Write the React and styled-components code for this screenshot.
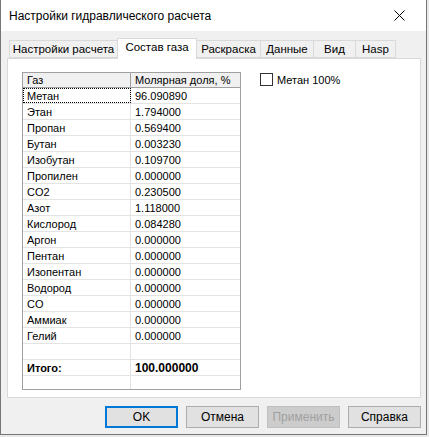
import React from "react";
import styled, { createGlobalStyle } from "styled-components";

const GlobalStyle = createGlobalStyle`
  html, body {
    margin: 0;
    padding: 0;
    background: #e8e8e8;
  }
  * {
    box-sizing: border-box;
  }
`;

const Window = styled.div`
  width: 427px;
  height: 435px;
  border: 1px solid #767676;
  border-top: none;
  background: #f0f0f0;
  display: flex;
  flex-direction: column;
  font-family: "Liberation Sans", Arial, sans-serif;
  color: #000;
`;

const TitleBar = styled.div`
  height: 31px;
  background: #fff;
  display: flex;
  align-items: center;
  justify-content: space-between;
  padding-left: 8px;
  font-size: 12px;
`;

const CloseButton = styled.div`
  width: 46px;
  height: 31px;
  display: flex;
  align-items: center;
  justify-content: center;
  margin-right: 4px;
`;

const Body = styled.div`
  flex: 1;
  display: flex;
  flex-direction: column;
  padding: 7px 5px 0 6px;
`;

const TabStrip = styled.div`
  display: flex;
  align-items: flex-end;
  height: 20px;
  padding-left: 2px;
  position: relative;
  z-index: 1;
`;

const Tab = styled.div`
  width: ${(p) => p.w}px;
  height: ${(p) => (p.active ? 21 : 18)}px;
  margin-left: ${(p) => (p.first ? 0 : -1)}px;
  margin-bottom: ${(p) => (p.active ? -1 : 0)}px;
  border: 1px solid #d9d9d9;
  border-bottom: ${(p) => (p.active ? "none" : "1px solid #d9d9d9")};
  background: ${(p) => (p.active ? "#fff" : "#f0f0f0")};
  font-size: 11.5px;
  display: flex;
  align-items: ${(p) => (p.active ? "flex-start" : "center")};
  padding-top: ${(p) => (p.active ? 2 : 0)}px;
  justify-content: center;
  position: relative;
  z-index: ${(p) => (p.active ? 2 : 1)};
  white-space: nowrap;
`;

const Panel = styled.div`
  height: 340px;
  background: #fff;
  border: 1px solid #d9d9d9;
  display: flex;
  align-items: flex-start;
  gap: 19px;
  padding: 13px 0 0 14px;
`;

const Grid = styled.div`
  width: 219px;
  height: 318px;
  border: 1px solid #a0a0a0;
  overflow: hidden;
  font-size: 11px;
  flex-shrink: 0;
`;

const Row = styled.div`
  display: grid;
  grid-template-columns: 108px 1fr;
  height: ${(p) => (p.header ? 15 : 16)}px;
  border-bottom: 1px solid ${(p) => (p.header ? "#a0a0a0" : "#e3e3e3")};
  background: ${(p) => (p.header ? "#f0f0f0" : "#fff")};
`;

const Cell = styled.div`
  border-right: ${(p) => (p.last ? "none" : "1px solid #e3e3e3")};
  border-right-color: ${(p) => (p.header ? "#a0a0a0" : "#e3e3e3")};
  padding-left: 4px;
  display: flex;
  align-items: center;
  white-space: nowrap;
  font-weight: ${(p) => (p.bold ? "bold" : "normal")};
  font-size: ${(p) => (p.big ? 12 : 11)}px;
  outline: ${(p) => (p.focus ? "1px dotted #000" : "none")};
  outline-offset: -1px;
`;

const CheckRow = styled.label`
  display: flex;
  align-items: center;
  gap: 4px;
  font-size: 11px;
  margin-top: 1px;
`;

const Box = styled.span`
  width: 13px;
  height: 13px;
  border: 1px solid #333;
  background: #fff;
`;

const ButtonBar = styled.div`
  display: flex;
  justify-content: flex-end;
  gap: 8px;
  padding-top: 8px;
`;

const Button = styled.button`
  width: 73px;
  height: 22px;
  font-family: "Liberation Sans", Arial, sans-serif;
  font-size: 12px;
  padding: 0;
  background: ${(p) => (p.disabled ? "#cccccc" : "#e1e1e1")};
  color: ${(p) => (p.disabled ? "#a0a0a0" : "#000")};
  border: ${(p) =>
    p.primary ? "2px solid #0078d7" : p.disabled ? "1px solid #bfbfbf" : "1px solid #adadad"};
`;

const gases = [
  ["Метан", "96.090890"],
  ["Этан", "1.794000"],
  ["Пропан", "0.569400"],
  ["Бутан", "0.003230"],
  ["Изобутан", "0.109700"],
  ["Пропилен", "0.000000"],
  ["CO2", "0.230500"],
  ["Азот", "1.118000"],
  ["Кислород", "0.084280"],
  ["Аргон", "0.000000"],
  ["Пентан", "0.000000"],
  ["Изопентан", "0.000000"],
  ["Водород", "0.000000"],
  ["CO", "0.000000"],
  ["Аммиак", "0.000000"],
  ["Гелий", "0.000000"],
];

const tabs = [
  ["Настройки расчета", 109],
  ["Состав газа", 80],
  ["Раскраска", 65],
  ["Данные", 54],
  ["Вид", 43],
  ["Hasp", 41],
];

export default function App() {
  return (
    <>
      <GlobalStyle />
      <Window>
        <TitleBar>
          <span>Настройки гидравлического расчета</span>
          <CloseButton>
            <svg width="11" height="11" viewBox="0 0 11 11">
              <path d="M0.5 0.5 L10.5 10.5 M10.5 0.5 L0.5 10.5" stroke="#000" strokeWidth="1" />
            </svg>
          </CloseButton>
        </TitleBar>
        <Body>
          <TabStrip>
            {tabs.map(([name, w], i) => (
              <Tab key={name} w={w} first={i === 0} active={i === 1}>
                {name}
              </Tab>
            ))}
          </TabStrip>
          <Panel>
            <Grid>
              <Row header>
                <Cell header>Газ</Cell>
                <Cell header last>Молярная доля, %</Cell>
              </Row>
              {gases.map(([name, value], i) => (
                <Row key={name}>
                  <Cell focus={i === 0}>{name}</Cell>
                  <Cell last>{value}</Cell>
                </Row>
              ))}
              <Row>
                <Cell />
                <Cell last />
              </Row>
              <Row>
                <Cell bold>Итого:</Cell>
                <Cell last bold big>100.000000</Cell>
              </Row>
              <Row>
                <Cell />
                <Cell last />
              </Row>
            </Grid>
            <CheckRow>
              <Box />
              Метан 100%
            </CheckRow>
          </Panel>
          <ButtonBar>
            <Button primary>OK</Button>
            <Button>Отмена</Button>
            <Button disabled>Применить</Button>
            <Button>Справка</Button>
          </ButtonBar>
        </Body>
      </Window>
    </>
  );
}
